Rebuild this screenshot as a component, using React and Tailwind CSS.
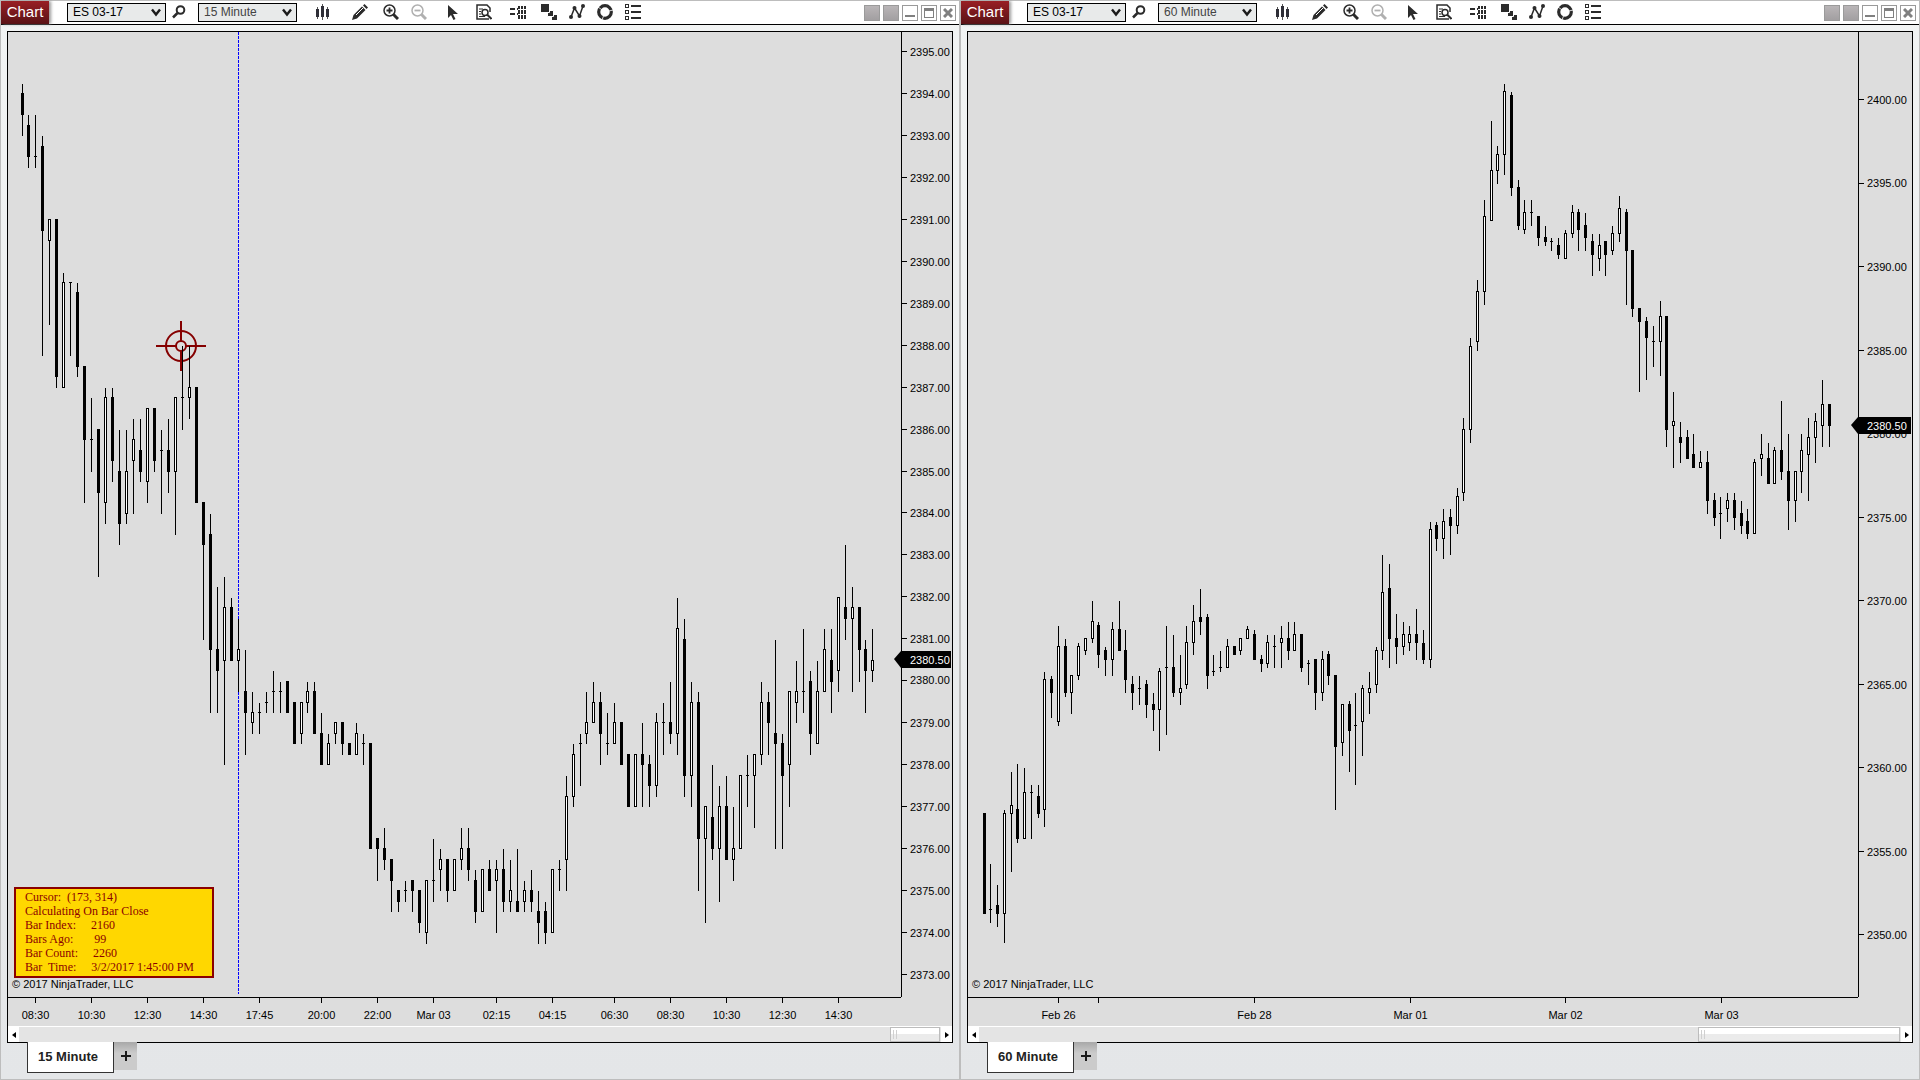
import React from "react";

/* Candles: [kind, high, bodyTop, bodyBottom, low]; kind u = up (hollow), d = down (solid), n = unchanged */

// 15 minute series, in quarter-point ticks counted down from 2396.00
const M15 = `d7,8,10,12 d10,11,14,15 n10,14,14,15 d12,13,21,33 u20,20,22,30 d20,20,35,36 u25,26,36,36 n26,26,26,33 d26,27,34,35 d34,34,41,47
n37,41,41,44 d40,40,46,54 u36,37,47,49 d36,37,43,45 d40,44,49,51 u40,44,48,49 u39,41,43,48 d39,42,44,45 u38,38,45,47 d38,38,43,44
n40,42,42,48 d39,42,44,46 u37,37,44,50 n32,37,37,40 u32,36,37,39 d36,36,47,47 d47,47,51,60 d48,50,61,67 d55,61,63,67 u54,57,62,72
d56,57,62,62 u58,61,62,65 d61,65,67,71 u65,67,68,69 n66,67,67,69 n65,66,66,67 n63,65,65,67 n64,65,65,67 d64,64,67,67 d66,66,70,70
u66,66,69,70 u64,65,66,67 d64,65,69,69 d67,69,72,72 u69,70,72,72 u68,68,69,70 d68,68,70,71 d70,70,71,71 u68,69,71,71 n69,70,70,72
d70,70,80,80 d79,79,80,83 d78,80,81,82 d81,81,83,86 d84,84,85,86 n83,84,84,85 d83,83,84,86 d84,84,87,88 u83,83,88,89 n79,83,83,85
u80,81,82,84 d81,81,84,85 u81,81,84,84 u78,80,81,82 d78,80,82,83 d82,83,86,87 u82,82,86,86 d81,82,84,84 u81,82,83,88 d80,82,85,86
u81,84,85,86 d80,85,86,86 u83,84,85,86 d82,84,85,86 d84,86,87,89 d85,86,88,89 u82,82,88,88 n81,82,82,84 u73,75,81,84 u70,71,75,76
n69,70,70,74 u65,68,69,70 u64,66,68,68 d65,66,69,72 n67,70,70,71 u66,68,70,70 d68,68,72,72 d71,71,76,76 u71,71,76,76 d68,71,72,76
d71,72,74,76 u67,68,74,75 n66,68,68,71 d64,68,69,70 u56,59,69,71 d58,60,73,75 u64,66,73,76 d65,66,79,84 u76,76,79,87 d72,77,80,81
u74,76,80,85 d73,76,81,81 u76,80,81,83 u73,73,80,80 n71,73,73,76 u71,71,73,78 u64,66,71,72 d65,66,68,71 d60,69,70,80 d69,70,73,80
u65,65,72,76 u62,65,66,68 n59,65,65,67 d63,64,69,71 u62,65,70,70 u59,61,65,65 d59,62,64,67 u56,56,63,65 d51,57,58,60 u55,57,58,65
d57,57,61,64 d60,61,63,67 u59,62,63,64`;

// 60 minute series, in chart units measured down from the top of the plot
const M60 = `d781,781,882,882 n832,877,878,891 d853,873,882,895 u778,781,882,911 u740,773,782,840 d732,777,807,811 u736,760,807,807 n753,760,761,807 d753,764,782,786 u640,647,778,795
d644,647,661,686 u594,614,690,694 d607,614,661,665 u643,643,661,682 u611,614,644,648 u606,606,619,623 u569,589,607,611 d590,593,623,636 d615,618,628,644 u590,597,628,644
d569,597,619,619 d598,618,648,661 d644,652,661,678 n644,656,657,673 d648,652,673,686 d661,672,678,699 u636,639,678,719 n594,635,636,703 d603,635,661,665 u623,656,661,673
u594,610,653,657 u573,589,611,623 d557,585,590,603 d582,585,644,657 n623,639,640,644 n619,635,636,640 u607,614,636,636 d614,614,623,623 u606,606,619,623 u594,597,607,607
d598,602,628,628 d623,627,632,640 u603,610,632,636 n603,614,615,636 u594,606,611,636 d590,606,619,628 u590,602,619,619 d602,602,636,640 n628,631,632,653 d627,627,661,678
u619,627,661,669 d619,622,644,653 d643,643,715,778 u672,672,711,724 d669,672,699,740 n661,693,694,753 u653,656,690,724 u640,656,661,682 u615,618,653,661 u523,560,619,628
d532,556,607,636 d582,606,615,632 u590,602,615,623 u594,602,611,619 d577,602,611,628 d598,611,628,632 u490,497,628,636 d490,493,507,519 u477,489,507,527 d477,485,494,523
u456,464,494,502 u386,397,461,469 u306,314,398,411 u248,259,310,319 u168,184,260,273 u89,138,189,189 u114,122,139,152 u52,59,123,143 d60,63,156,164 d148,155,194,198
u168,180,198,202 n168,180,181,194 d184,184,206,214 d194,205,210,214 n206,209,210,219 d206,213,223,227 u198,201,227,227 u173,180,202,206 d177,180,198,219 d181,193,206,219
d202,209,223,244 u202,213,227,239 d209,209,223,244 u194,201,219,223 u164,176,202,210 d177,180,219,273 d218,218,277,285 d276,276,290,360 d285,289,306,348 n294,309,310,335
u269,284,310,344 d284,284,398,415 u360,389,394,436 d390,405,411,431 d398,405,427,427 d402,422,436,436 u419,430,436,436 d419,430,469,482 d461,468,486,494 n465,481,482,507
u461,468,477,490 d461,468,486,498 d469,481,494,502 d477,489,502,507 u427,430,502,502 u402,422,427,444 d411,426,452,452 u415,418,452,452 d369,418,440,448 d402,439,469,498
u439,439,469,490 u402,418,440,461 u386,405,423,469 u381,389,406,431 u348,372,394,415 d372,372,394,415`;

const parse = (text) =>
  text.split(/\s+/).map((s) => ({ kind: s[0], v: s.slice(1).split(",").map(Number) }));

const toBars = (list, x0, step, y) =>
  list.map(({ kind, v }, i) => {
    const [h, t, b, l] = y ? y(v) : v;
    return { kind, x: Math.floor((x0 * 1000 + step * i) / 1000), h, t, b, l };
  });

const tickY = (u) => Math.round(10.488 * u - 22.7);
const bars15 = toBars(parse(M15), 14, 6975, ([h, t, b, l]) => [
  h === t ? tickY(h) : tickY(h) + 1,
  tickY(t),
  tickY(b) + 1,
  tickY(l) + 1,
]);
const bars60 = toBars(parse(M60), 16, 6760);

const PLOT_H = 965;

const CHARTS = [
  {
    label: "15 Minute",
    bars: bars15,
    width: 893,
    axis: "w-[51px]",
    prices: Array.from({ length: 23 }, (_, i) => ({
      text: `${2395 - i}.00`,
      y: Math.round(19 + i * 41.95) + 0.5,
    })),
    times: [
      ["08:30", 27], ["10:30", 83], ["12:30", 139], ["14:30", 195], ["17:45", 251], ["20:00", 313],
      ["22:00", 369], ["Mar 03", 425], ["02:15", 488], ["04:15", 544], ["06:30", 606], ["08:30", 662],
      ["10:30", 718], ["12:30", 774], ["14:30", 830],
    ],
    marker: 627,
    cursor: true,
    thumb: "w-[50px]",
  },
  {
    label: "60 Minute",
    bars: bars60,
    width: 890,
    axis: "w-[54px]",
    prices: Array.from({ length: 11 }, (_, i) => ({
      text: `${2400 - i * 5}.00`,
      y: Math.round(67 + i * 83.5) + 0.5,
    })),
    times: [["Feb 26", 90], ["", 130], ["Feb 28", 286], ["Mar 01", 442], ["Mar 02", 597], ["Mar 03", 753]],
    marker: 393,
    cursor: false,
    thumb: "w-[202px]",
  },
];

function Plot({ chart }) {
  const wicks = [];
  const black = [];
  const white = [];
  chart.bars.forEach(({ kind, x, h, t, b, l }) => {
    wicks.push(`M${x} ${h}h1V${l}h-1z`);
    black.push(`M${x - 1} ${t}h3V${b}h-3z`);
    if (kind === "u") white.push(`M${x} ${t + 1}h1V${b - 1}h-1z`);
  });
  return (
    <svg
      className="absolute inset-0 h-full w-full"
      viewBox={`0 0 ${chart.width} ${PLOT_H}`}
      preserveAspectRatio="none"
      shapeRendering="crispEdges"
      role="img"
      aria-label={`ES 03-17 ${chart.label} candles`}
    >
      {chart.cursor && (
        <>
          <path d="M230.500 0V962" stroke="#0000ff" strokeDasharray="3 1" />
          <g fill="none" stroke="#850000" strokeWidth="2">
            <circle cx="173" cy="314" r="15" shapeRendering="auto" />
            <circle cx="173" cy="314" r="5" shapeRendering="auto" />
            <path d="M148 314h20M178 314h20M173 289v20M173 319v20" />
          </g>
        </>
      )}
      <path d={wicks.join("")} />
      <path d={black.join("")} />
      <path d={white.join("")} fill="#fff" />
    </svg>
  );
}

function PriceAxis({ chart }) {
  const pct = (y) => `${(y / PLOT_H) * 100}%`;
  return (
    <div className={`shrink-0 border-l border-black ${chart.axis}`}>
      <svg className="block h-full w-full overflow-visible text-[11px]">
        {chart.prices.map((p) => (
          <g key={p.text}>
            <line x1="0" x2="5" y1={pct(p.y)} y2={pct(p.y)} stroke="#000" shapeRendering="crispEdges" />
            <text x="8" y={pct(p.y + 4)}>{p.text}</text>
          </g>
        ))}
        <svg y={pct(chart.marker)} className="overflow-visible">
          <path d="M-8 0L-1-8V9z" />
          <rect x="-1" y="-8" width="100%" height="17" />
          <text x="8" y="5" fill="#fff">2380.50</text>
        </svg>
      </svg>
    </div>
  );
}

function TimeAxis({ chart }) {
  return (
    <div className="flex h-7 shrink-0">
      <svg className="block h-full min-w-0 flex-1 text-[11px]">
        {chart.times.map(([text, x]) => {
          const left = `${((x + 0.5) / chart.width) * 100}%`;
          return (
            <g key={x}>
              <line x1={left} x2={left} y1="0" y2="5" stroke="#000" shapeRendering="crispEdges" />
              <text x={left} y="21" textAnchor="middle">{text}</text>
            </g>
          );
        })}
      </svg>
      <div className={`shrink-0 ${chart.axis}`} />
    </div>
  );
}

function Picker({ label, options, tone }) {
  return (
    <div className="relative h-[19px] w-[99px] shrink-0">
      <select
        aria-label={label}
        className={`block h-full w-full appearance-none border border-black bg-[#e8eaea] pl-[5px] text-[12px] leading-[17px] outline-none ${tone}`}
      >
        {options.map((o) => (
          <option key={o}>{o}</option>
        ))}
      </select>
      <svg className="pointer-events-none absolute top-[5px] right-[5px]" width="10" height="9" viewBox="0 0 10 9">
        <path d="M1 1.500L5 6.500L9 1.500" fill="none" stroke="#1a1a1a" strokeWidth="2.400" />
      </svg>
    </div>
  );
}

const INK = "#2b2b2b";
const ICONS = {
  bars: (
    <g shapeRendering="crispEdges">
      <path d="M2.500 3v12M7.500 0v16M12.500 3v12" stroke="#555" />
      <path d="M1 5h3v8H1zM6 2h3v11H6zM11 5h3v8h-3z" fill="#2f2f38" />
    </g>
  ),
  pencil: (
    <g>
      <path d="M0 16l1.500-5L10 2.500l3.500 3.500L5 14.500z" fill={INK} />
      <path d="M11 1.500L12.500 0 16 3.500 14.500 5z" fill={INK} />
      <path d="M4 11l7-7" stroke="#fff" />
    </g>
  ),
  zoomIn: (
    <g fill="none" stroke={INK}>
      <circle cx="6.500" cy="6.500" r="5.500" strokeWidth="1.500" />
      <path d="M3.500 6.500h6M6.500 3.500v6" strokeWidth="1.800" />
      <path d="M10.500 10.500L15 15" strokeWidth="3" />
    </g>
  ),
  zoomOut: (
    <g fill="none" stroke="#b0b0b0">
      <circle cx="6.500" cy="6.500" r="5.500" strokeWidth="1.500" />
      <path d="M3.500 6.500h6" strokeWidth="1.800" />
      <path d="M10.500 10.500L15 15" strokeWidth="3" />
    </g>
  ),
  pointer: <path d="M4 1v13l3-3 2.500 5 2-1-2.500-5h5z" fill={INK} />,
  inspect: (
    <g fill="none" stroke={INK}>
      <path d="M14 8V4l-3-3H1v14h12" strokeWidth="1.500" />
      <path d="M3 5h4M3 7.500h2M3 10h2M3 12.500h6" />
      <circle cx="9" cy="8.500" r="3" strokeWidth="1.500" />
      <path d="M11 10.500l4.500 4.500" strokeWidth="2" />
    </g>
  ),
  dom: (
    <path
      fill={INK}
      shapeRendering="crispEdges"
      d="M0 4h5v2H0zM0 9h5v2H0zM7 4h1v2H7zM7 9h1v2H7zM8 2h2v3H8zM8 6h2v4H8zM8 11h2v4H8zM11 2h2v3h-2zM11 6h2v4h-2zM11 11h2v4h-2zM14 2h2v3h-2zM14 6h2v4h-2zM14 11h2v4h-2z"
    />
  ),
  steps: (
    <g fill={INK} stroke="#fff">
      <path d="M10.500 10.500h6v6h-6z" />
      <path d="M6.500 6.500h6v6h-6z" />
      <path d="M-.5-.5h9v9h-9z" />
    </g>
  ),
  path: (
    <g fill={INK}>
      <path d="M2 13L5.500 4l5 8L14 2" fill="none" stroke={INK} strokeWidth="1.500" />
      <circle cx="2" cy="13" r="2" />
      <circle cx="5.500" cy="4" r="2" />
      <circle cx="10.500" cy="12" r="2" />
      <circle cx="14" cy="2" r="2" />
    </g>
  ),
  ring: (
    <g>
      <circle cx="8" cy="8" r="6.300" fill="none" stroke={INK} strokeWidth="3.200" />
      <path d="M8 8L1 3M8 8l8-2M8 8l-3 8" stroke="#fff" strokeWidth=".8" />
    </g>
  ),
  list: (
    <g shapeRendering="crispEdges" fill="none" stroke={INK}>
      <path d="M.5.5h3v3h-3zM.5 6.500h3v3h-3zM.5 12.500h3v3h-3z" />
      <path d="M6 2h10M6 8h10M6 14h10" strokeWidth="2" />
    </g>
  ),
};

const TOOLS = [
  ["bars", "Bar style", "ml-[18px]"],
  ["pencil", "Drawing tools", "ml-[21px]"],
  ["zoomIn", "Zoom in", "ml-[15px]"],
  ["zoomOut", "Zoom out", "ml-3"],
  ["pointer", "Pointer", "ml-[17px]"],
  ["inspect", "Data box", "ml-4"],
  ["dom", "Chart trader", "ml-[18px]"],
  ["steps", "Data series", "ml-[15px]"],
  ["path", "Indicators", "ml-3"],
  ["ring", "Strategies", "ml-3"],
  ["list", "Properties", "ml-3"],
];

function WindowButtons() {
  const frame = "h-4 w-4 border border-[#9a9a9a]";
  return (
    <div className="mt-[2px] ml-auto flex shrink-0 gap-[3px] pr-[3px]">
      <button aria-label="Link instrument" className={`${frame} bg-linear-to-b from-[#b9b5b7] to-[#a29fa1]`} />
      <button aria-label="Link interval" className={`${frame} bg-linear-to-b from-[#b9b5b7] to-[#a29fa1]`} />
      <button aria-label="Minimize" className={`${frame} flex items-end justify-center bg-white pb-[3px]`}>
        <span className="h-[2px] w-[10px] bg-[#808080]" />
      </button>
      <button aria-label="Maximize" className={`${frame} flex items-center justify-center bg-white`}>
        <span className="h-[10px] w-[10px] border border-t-[3px] border-[#808080]" />
      </button>
      <button aria-label="Close" className={`${frame} flex items-center justify-center bg-white`}>
        <svg width="10" height="10" viewBox="0 0 10 10">
          <path d="M1 1l8 8M9 1l-8 8" stroke="#808080" strokeWidth="3" />
        </svg>
      </button>
    </div>
  );
}

function Toolbar({ chart }) {
  return (
    <header className="flex h-6 shrink-0 items-center border-b border-black bg-white pb-px">
      <div className="-mb-px flex h-[23px] w-12 shrink-0 items-center justify-center bg-linear-to-b from-[#991f24] to-[#5a1216] text-[15px] text-white shadow-[2px_0_3px_#999]">
        Chart
      </div>
      <div className="ml-[18px] flex">
        <Picker label="Instrument" options={["ES 03-17"]} tone="text-black" />
      </div>
      <button aria-label="Search instrument" className="ml-[6px] shrink-0">
        <svg width="14" height="14" viewBox="0 0 14 14" fill="none" stroke={INK}>
          <circle cx="8.500" cy="5" r="3.800" strokeWidth="2" />
          <path d="M5.500 8L1 12.500" strokeWidth="2.500" />
        </svg>
      </button>
      <div className="ml-3 flex">
        <Picker label="Interval" options={[chart.label]} tone="text-[#444]" />
      </div>
      {TOOLS.map(([icon, label, gap]) => (
        <button key={icon} aria-label={label} className={`shrink-0 ${gap}`}>
          <svg width="16" height="16" viewBox="0 0 16 16">{ICONS[icon]}</svg>
        </button>
      ))}
      <WindowButtons />
    </header>
  );
}

function CursorInfo() {
  return (
    <pre className="absolute bottom-[19px] left-[6px] h-[91px] w-[200px] border-2 border-[#8b0000] bg-[#ffd700] pt-px pl-[9px] font-['Liberation_Serif',serif] text-[12px] leading-[14px] text-[#8b0000]">
      {`Cursor:  (173, 314)
Calculating On Bar Close
Bar Index:     2160
Bars Ago:       99
Bar Count:     2260
Bar  Time:     3/2/2017 1:45:00 PM`}
    </pre>
  );
}

function ScrollBar({ chart }) {
  return (
    <div className="flex h-4 shrink-0 border-t border-white bg-[#e4e4e4]">
      <button aria-label="Scroll left" className="flex w-[11px] items-center justify-center bg-white">
        <svg width="4" height="6" viewBox="0 0 4 6"><path d="M4 0v6L0 3z" /></svg>
      </button>
      <div className="flex flex-1 justify-end">
        <div className={`flex gap-[2px] border border-[#bcbcbc] bg-linear-to-b from-white from-50% to-[#ebebeb] to-50% py-[2px] pl-[2px] ${chart.thumb}`}>
          <span className="w-px bg-[#d0d0d0]" />
          <span className="w-px bg-[#d0d0d0]" />
        </div>
      </div>
      <button aria-label="Scroll right" className="ml-px flex w-[11px] items-center justify-center bg-white">
        <svg width="4" height="6" viewBox="0 0 4 6"><path d="M0 0v6L4 3z" /></svg>
      </button>
    </div>
  );
}

function ChartWindow({ chart }) {
  return (
    <section className="flex h-full min-w-0 flex-col border border-[#bdbdbd] bg-linear-to-b from-[#f2f4f4] to-[#e4e6e8]">
      <Toolbar chart={chart} />
      <main className="mx-[6px] mt-[6px] flex min-h-0 flex-1 flex-col border border-black bg-[#dddddd]">
        <div className="flex min-h-0 flex-1">
          <div className="relative min-w-0 flex-1 border-b border-black">
            <Plot chart={chart} />
            {chart.cursor && <CursorInfo />}
            <p className="absolute bottom-[6px] left-1 text-[11px] leading-[14px]">© 2017 NinjaTrader, LLC</p>
          </div>
          <div className="flex pb-px">
            <PriceAxis chart={chart} />
          </div>
        </div>
        <TimeAxis chart={chart} />
        <ScrollBar chart={chart} />
      </main>
      <nav className="relative -mt-px flex h-[37px] shrink-0 items-start pl-[26px]">
        <button className="h-[31px] w-[87px] border border-t-0 border-[#333] bg-white pl-[10px] text-left text-[13px] font-bold text-[#222]">
          {chart.label}
        </button>
        <button
          aria-label="Add tab"
          className="flex h-[28px] w-[23px] items-center justify-center bg-linear-to-b from-[#a8a8a8] to-[#cbcbcb] to-40%"
        >
          <svg width="10" height="10" viewBox="0 0 10 10">
            <path d="M5 0v10M0 5h10" stroke="#1a1a1a" strokeWidth="2" />
          </svg>
        </button>
      </nav>
    </section>
  );
}

export default function App() {
  return (
    <div className="grid h-screen grid-cols-2 overflow-hidden bg-[#e4e6e8] font-['Liberation_Sans',Arial,sans-serif] text-black">
      {CHARTS.map((c) => (
        <ChartWindow key={c.label} chart={c} />
      ))}
    </div>
  );
}
